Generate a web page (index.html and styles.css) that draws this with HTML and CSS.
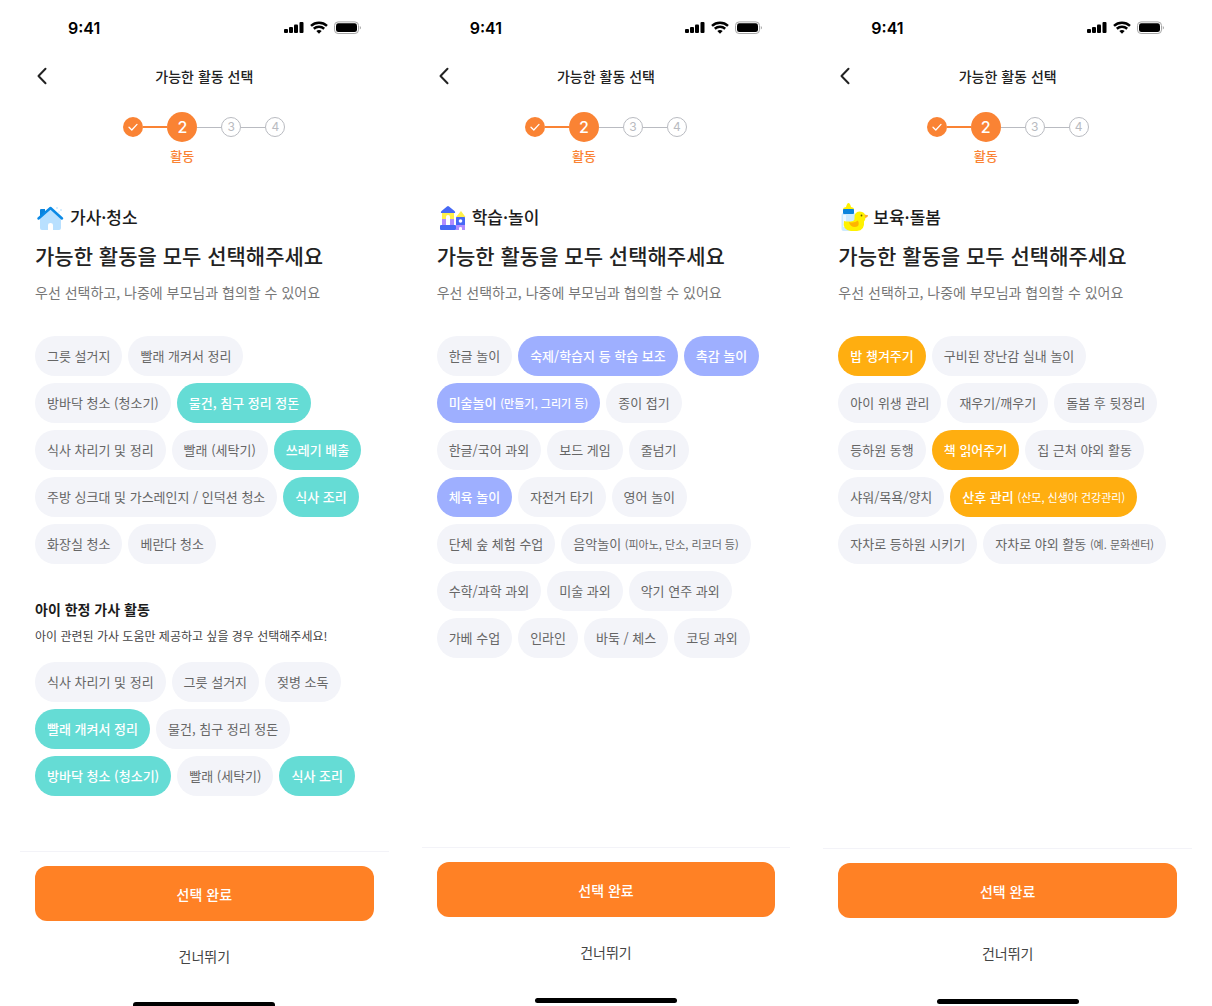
FILE: index.html
```
<!DOCTYPE html>
<html lang="ko">
<head>
  <title>가능한 활동 선택</title>
  <meta charset="utf-8" />
  <meta name="viewport" content="width=device-width, initial-scale=1" />
  <link rel="stylesheet" href="styles.css">
</head>
<body>
  <!-- shared icons -->
  <svg class="sprite" aria-hidden="true">
    <symbol id="status-icons" viewBox="0 0 78 14">
      <rect x="0" y="8" width="4" height="4" rx="1" />
      <rect x="5" y="6" width="4" height="6" rx="1" />
      <rect x="10" y="3.500" width="4" height="8.500" rx="1" />
      <rect x="15.500" y="1" width="4" height="11" rx="1" />
      <g fill="none" stroke="#000" stroke-width="2.500">
        <path d="M27 4.800C31.500.700 38.500.700 43 4.800" />
        <path d="M29.800 7.800C32.800 5.200 37.200 5.200 40.200 7.800" />
      </g>
      <path d="M32.300 9.900Q35 8 37.700 9.900L35 12.800Z" />
      <rect x="50.500" y=".900" width="24" height="11.600" rx="3.600" fill="none" stroke="#a6a6a6" />
      <rect x="52" y="2.300" width="21" height="8.800" rx="2.400" />
      <path d="M75.800 5v3.600Q77 8 77 6.800T75.800 5Z" fill="#a6a6a6" />
    </symbol>
    <symbol id="chevron" viewBox="0 0 12 18">
      <path d="M9.500 1.800 2.500 9l7 7.200" fill="none" stroke="#222" stroke-width="2" stroke-linecap="round" stroke-linejoin="round" />
    </symbol>
    <symbol id="check" viewBox="0 0 10 10">
      <path d="M1 5.200 3.800 8 9 2.400" fill="none" stroke="#fff" stroke-width="1.300" stroke-linecap="round" stroke-linejoin="round" />
    </symbol>
  </svg>

  <div class="screens">

    <!-- 가사·청소 -->
    <section class="phone phone-home">
      <div class="status"><span>9:41</span><svg><use href="#status-icons" /></svg></div>
      <header class="nav">
        <button class="back" aria-label="뒤로"><svg><use href="#chevron" /></svg></button>
        <h1>가능한 활동 선택</h1>
      </header>
      <ol class="steps">
        <li class="done"><span class="dot"><svg><use href="#check" /></svg></span></li>
        <li class="now"><span class="dot">2</span><span class="label">활동</span></li>
        <li><span class="dot">3</span></li>
        <li><span class="dot">4</span></li>
      </ol>
      <main>
        <div class="category">
          <svg viewBox="0 0 30 30">
            <path d="M5 15 15 6l11 9v11q0 2-2 2H7q-2 0-2-2Z" fill="#b8e0ff" />
            <path d="M13 28v-5q0-2 2.500-2t2.500 2v5Z" fill="#fff" />
            <path d="M5 8q0-1 1-1h4v4l-5 4Z" fill="#0b83dc" />
            <path d="M3.500 16.500 15.500 6 27 16.500" fill="none" stroke="#0b8ae6" stroke-width="2.500" stroke-linecap="round" stroke-linejoin="round" />
            <circle cx="22" cy="6" r="1" fill="#c9e8ff" />
            <circle cx="26" cy="8" r="1" fill="#c9e8ff" />
            <circle cx="24" cy="10" r="1" fill="#e0f2ff" />
          </svg>
          <span>가사·청소</span>
        </div>
        <h2>가능한 활동을 모두 선택해주세요</h2>
        <p class="guide">우선 선택하고, 나중에 부모님과 협의할 수 있어요</p>
        <div class="chips">
          <div class="row">
            <button class="chip">그릇 설거지</button>
            <button class="chip">빨래 개켜서 정리</button>
          </div>
          <div class="row">
            <button class="chip">방바닥 청소 (청소기)</button>
            <button class="chip on" aria-pressed="true">물건, 침구 정리 정돈</button>
          </div>
          <div class="row">
            <button class="chip">식사 차리기 및 정리</button>
            <button class="chip">빨래 (세탁기)</button>
            <button class="chip on" aria-pressed="true">쓰레기 배출</button>
          </div>
          <div class="row">
            <button class="chip">주방 싱크대 및 가스레인지 / 인덕션 청소</button>
            <button class="chip on" aria-pressed="true">식사 조리</button>
          </div>
          <div class="row">
            <button class="chip">화장실 청소</button>
            <button class="chip">베란다 청소</button>
          </div>
        </div>
        <h3>아이 한정 가사 활동</h3>
        <p class="desc">아이 관련된 가사 도움만 제공하고 싶을 경우 선택해주세요!</p>
        <div class="chips">
          <div class="row">
            <button class="chip">식사 차리기 및 정리</button>
            <button class="chip">그릇 설거지</button>
            <button class="chip">젖병 소독</button>
          </div>
          <div class="row">
            <button class="chip on" aria-pressed="true">빨래 개켜서 정리</button>
            <button class="chip">물건, 침구 정리 정돈</button>
          </div>
          <div class="row">
            <button class="chip on" aria-pressed="true">방바닥 청소 (청소기)</button>
            <button class="chip">빨래 (세탁기)</button>
            <button class="chip on" aria-pressed="true">식사 조리</button>
          </div>
        </div>
      </main>
      <footer>
        <button class="submit">선택 완료</button>
        <button class="skip">건너뛰기</button>
        <div class="home-bar"></div>
      </footer>
    </section>

    <!-- 학습·놀이 -->
    <section class="phone phone-study">
      <div class="status"><span>9:41</span><svg><use href="#status-icons" /></svg></div>
      <header class="nav">
        <button class="back" aria-label="뒤로"><svg><use href="#chevron" /></svg></button>
        <h1>가능한 활동 선택</h1>
      </header>
      <ol class="steps">
        <li class="done"><span class="dot"><svg><use href="#check" /></svg></span></li>
        <li class="now"><span class="dot">2</span><span class="label">활동</span></li>
        <li><span class="dot">3</span></li>
        <li><span class="dot">4</span></li>
      </ol>
      <main>
        <div class="category">
          <svg viewBox="0 0 30 30">
            <path d="M4 11q-.500-1 .500-2L10 4.500q1-1 2 0L17.500 9q1 1 .500 2Z" fill="#4668f5" />
            <path d="M5 11h12v6H5Z" fill="#fff04a" />
            <path d="M5 17h12v6H5Z" fill="#b08cff" />
            <path d="M9 23v-8q0-2 2-2t2 2v8Z" fill="#fff" />
            <path d="M19 15 24 9l4.500 6Z" fill="#fff04a" />
            <rect x="19" y="15" width="9" height="8" rx=".500" fill="#4668f5" />
            <circle cx="23.500" cy="19" r="1.800" fill="#fff" />
            <rect x="3" y="23" width="16" height="5" rx="1" fill="#4668f5" />
            <path d="M19 23h9v5h-3v-2q0-1-1.500-1T22 26v2h-3Z" fill="#b08cff" />
          </svg>
          <span>학습·놀이</span>
        </div>
        <h2>가능한 활동을 모두 선택해주세요</h2>
        <p class="guide">우선 선택하고, 나중에 부모님과 협의할 수 있어요</p>
        <div class="chips">
          <div class="row">
            <button class="chip">한글 놀이</button>
            <button class="chip on" aria-pressed="true">숙제/학습지 등 학습 보조</button>
            <button class="chip on" aria-pressed="true">촉감 놀이</button>
          </div>
          <div class="row">
            <button class="chip on" aria-pressed="true">미술놀이 <small>(만들기, 그리기 등)</small></button>
            <button class="chip">종이 접기</button>
          </div>
          <div class="row">
            <button class="chip">한글/국어 과외</button>
            <button class="chip">보드 게임</button>
            <button class="chip">줄넘기</button>
          </div>
          <div class="row">
            <button class="chip on" aria-pressed="true">체육 놀이</button>
            <button class="chip">자전거 타기</button>
            <button class="chip">영어 놀이</button>
          </div>
          <div class="row">
            <button class="chip">단체 숲 체험 수업</button>
            <button class="chip">음악놀이 <small>(피아노, 단소, 리코더 등)</small></button>
          </div>
          <div class="row">
            <button class="chip">수학/과학 과외</button>
            <button class="chip">미술 과외</button>
            <button class="chip">악기 연주 과외</button>
          </div>
          <div class="row">
            <button class="chip">가베 수업</button>
            <button class="chip">인라인</button>
            <button class="chip">바둑 / 체스</button>
            <button class="chip">코딩 과외</button>
          </div>
        </div>
      </main>
      <footer>
        <button class="submit">선택 완료</button>
        <button class="skip">건너뛰기</button>
        <div class="home-bar"></div>
      </footer>
    </section>

    <!-- 보육·돌봄 -->
    <section class="phone phone-care">
      <div class="status"><span>9:41</span><svg><use href="#status-icons" /></svg></div>
      <header class="nav">
        <button class="back" aria-label="뒤로"><svg><use href="#chevron" /></svg></button>
        <h1>가능한 활동 선택</h1>
      </header>
      <ol class="steps">
        <li class="done"><span class="dot"><svg><use href="#check" /></svg></span></li>
        <li class="now"><span class="dot">2</span><span class="label">활동</span></li>
        <li><span class="dot">3</span></li>
        <li><span class="dot">4</span></li>
      </ol>
      <main>
        <div class="category">
          <svg viewBox="0 0 30 30">
            <path d="M5 7q0-1.500 3-2Q9 1 10.500 1T13 5q3 .500 3 2v1H5Z" fill="#fff000" />
            <rect x="3.500" y="11" width="14" height="18" rx="2" fill="#cdeaff" />
            <path d="M5 13h3v12H5Z" fill="#eef8ff" />
            <rect x="5" y="7" width="11" height="5" rx="1" fill="#0b83dc" />
            <path d="M6 19q4 1 9 0 2-1 1.500-3-.500-6 5-6.500 6 0 6 6 0 2-1.500 4 1 9-7 9.500h-6Q4 28 6 19Z" fill="#fff200" />
            <path d="M26.500 12.500 30 13.200q.500.800-1 2L27 16Z" fill="#ffad33" />
            <path d="M11 20q5 1.500 9-1.500 2.500 6-3 6.500-5 0-6-5Z" fill="#ffb400" />
            <circle cx="23.500" cy="13.500" r=".900" fill="#665c00" />
          </svg>
          <span>보육·돌봄</span>
        </div>
        <h2>가능한 활동을 모두 선택해주세요</h2>
        <p class="guide">우선 선택하고, 나중에 부모님과 협의할 수 있어요</p>
        <div class="chips">
          <div class="row">
            <button class="chip on" aria-pressed="true">밥 챙겨주기</button>
            <button class="chip">구비된 장난감 실내 놀이</button>
          </div>
          <div class="row">
            <button class="chip">아이 위생 관리</button>
            <button class="chip">재우기/깨우기</button>
            <button class="chip">돌봄 후 뒷정리</button>
          </div>
          <div class="row">
            <button class="chip">등하원 동행</button>
            <button class="chip on" aria-pressed="true">책 읽어주기</button>
            <button class="chip">집 근처 야외 활동</button>
          </div>
          <div class="row">
            <button class="chip">샤워/목욕/양치</button>
            <button class="chip on" aria-pressed="true">산후 관리 <small class="thin">(산모, 신생아 건강관리)</small></button>
          </div>
          <div class="row">
            <button class="chip">자차로 등하원 시키기</button>
            <button class="chip">자차로 야외 활동 <small>(예. 문화센터)</small></button>
          </div>
        </div>
      </main>
      <footer>
        <button class="submit">선택 완료</button>
        <button class="skip">건너뛰기</button>
        <div class="home-bar"></div>
      </footer>
    </section>

  </div>
</body>
</html>
```
FILE: styles.css
```
* {
  box-sizing: border-box;
}

body {
  margin: 0;
  background: #fff;
  color: #222;
  font-family: "Noto Sans CJK KR", "Noto Sans", sans-serif;
}

button {
  border: 0;
  padding: 0;
  background: none;
  color: inherit;
  font-family: inherit;
  white-space: nowrap;
  cursor: pointer;
}

h1, h2, h3, p, ol {
  margin: 0;
  padding: 0;
}

.sprite {
  display: none;
}

.screens {
  display: grid;
  grid-template-columns: repeat(auto-fit, minmax(360px, 1fr));
  gap: 33px;
  padding: 0 20px;
}

.phone {
  display: flex;
  flex-direction: column;
  min-height: 100vh;
}

.phone-home {
  --accent: #65dcd5;
}

.phone-study {
  --accent: #9eafff;
  padding-bottom: 3px;
}

.phone-care {
  --accent: #ffae10;
  padding-bottom: 2px;
}

/* top */
.status {
  display: flex;
  justify-content: space-between;
  align-items: center;
  height: 56px;
  padding: 0 27px 0 48px;
  color: #000;
  font: 600 16px/20px Inter, sans-serif;
}

.status svg {
  width: 78px;
  height: 14px;
}

.nav {
  display: grid;
  grid-template-columns: 44px 1fr 44px;
  align-items: center;
  height: 40px;
}

.nav h1 {
  font-size: 14px;
  line-height: 20px;
  font-weight: 500;
  text-align: center;
}

.back {
  display: flex;
  padding-left: 16px;
}

.back svg {
  width: 12px;
  height: 18px;
}

.steps {
  display: flex;
  justify-content: center;
  height: 72px;
  padding-top: 16px;
  list-style: none;
}

.steps li {
  display: grid;
  grid-template-columns: auto auto;
  grid-template-rows: 30px 20px;
  row-gap: 4px;
  align-items: center;
}

.steps li + li::before {
  content: "";
  width: 24px;
  height: 1px;
  background: #b9bbc1;
}

.steps li.now::before {
  height: 2px;
  background: #fa8334;
}

.dot {
  display: flex;
  justify-content: center;
  align-items: center;
  width: 20px;
  height: 20px;
  border: 1px solid #b9bbc1;
  border-radius: 50%;
  color: #b9bbc1;
  font: 400 12px/18px Inter, sans-serif;
}

.dot svg {
  width: 10px;
  height: 10px;
}

.done .dot, .now .dot {
  border: 0;
  background: #fa8334;
  color: #fff;
}

.now .dot {
  width: 30px;
  height: 30px;
  font-size: 16px;
  font-weight: 500;
}

.label {
  grid-column: 2;
  color: #fa8334;
  font-size: 13px;
  line-height: 20px;
  font-weight: 500;
  text-align: center;
}

/* content */
main {
  padding: 34px 15px 0;
}

.category {
  display: flex;
  align-items: center;
  gap: 5px;
  color: #1c1c1c;
  font-size: 17px;
  line-height: 30px;
  font-weight: 500;
}

.category svg {
  width: 30px;
  height: 30px;
}

h2 {
  margin-top: 6px;
  font-size: 21px;
  line-height: 34px;
  font-weight: 500;
}

.guide {
  margin-top: 9px;
  color: #777;
  font-size: 14px;
  line-height: 22px;
}

.chips {
  display: flex;
  flex-direction: column;
  gap: 7px;
  margin-top: 33px;
}

.row {
  display: flex;
  gap: 6px;
}

.chip {
  height: 40px;
  padding: 0 12px;
  border-radius: 20px;
  background: #f3f4f9;
  color: #666;
  font-size: 13px;
  line-height: 20px;
}

.chip small {
  font-size: 11px;
}

.chip .thin {
  font-weight: 400;
}

.chip.on {
  background: var(--accent);
  color: #fff;
  font-weight: 500;
}

h3 {
  margin-top: 33px;
  color: #1c1c1c;
  font-size: 14px;
  line-height: 24px;
  font-weight: 700;
}

.desc {
  margin-top: 5px;
  color: #444;
  font-size: 12px;
  line-height: 20px;
}

.desc + .chips {
  margin-top: 16px;
}

/* bottom */
footer {
  display: flex;
  flex-direction: column;
  margin-top: auto;
  padding: 14px 15px 0;
  border-top: 1px solid #f3f3f8;
}

.submit {
  height: 55px;
  border-radius: 12px;
  background: #ff8125;
  color: #fff;
  font-size: 14px;
  line-height: 24px;
  font-weight: 500;
}

.skip {
  align-self: center;
  height: 24px;
  margin: 23px 0 34px;
  color: #444;
  font-size: 14px;
  line-height: 24px;
}

.home-bar {
  align-self: center;
  width: 142px;
  height: 5px;
  border-radius: 3px;
  background: #000;
}

.phone-home .home-bar {
  height: 4px;
  border-radius: 3px 3px 0 0;
}
```
